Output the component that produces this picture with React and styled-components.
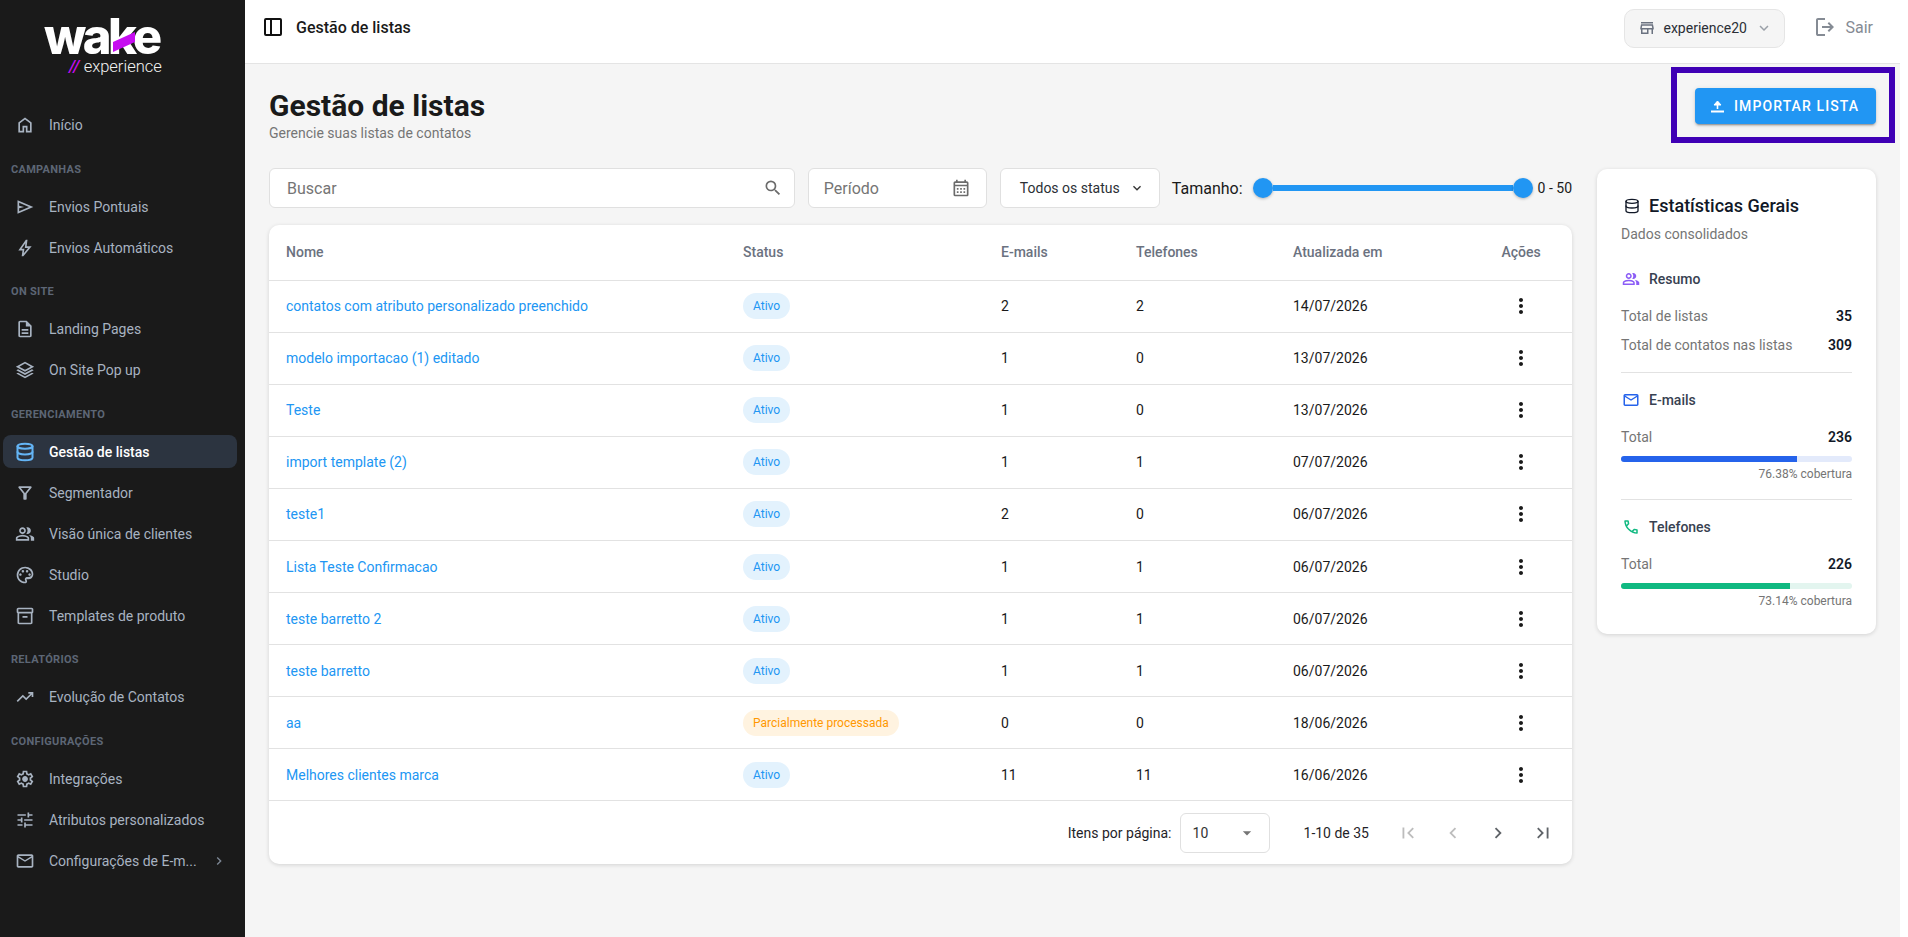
import styled, { createGlobalStyle } from "styled-components";
import {
  MdChevronRight,
  MdExpandMore,
  MdSearch,
  MdOutlineCalendarMonth,
  MdMoreVert,
  MdArrowDropDown,
  MdFirstPage,
  MdLastPage,
  MdChevronLeft,
} from "react-icons/md";
import { LuDatabase } from "react-icons/lu";

const GlobalStyle = createGlobalStyle`
  * { box-sizing: border-box; }
  html, body { margin: 0; padding: 0; background: #fff; }
  body { font-family: Roboto, "Liberation Sans", sans-serif; color: #1a1a1a; overflow: hidden; }
`;

// material symbols paths, the icon packages only have the older md set
const symbols = {
  home: "M240-200h120v-240h240v240h120v-360L480-740 240-560v360Zm-80 80v-480l320-240 320 240v480H520v-240h-80v240H160Z",
  send: "M120-160v-640l760 320-760 320Zm80-120 474-200-474-200v140l240 60-240 60v140Zm0 0v-400 400Z",
  bolt: "m422-232 207-248H469l29-227-185 267h139l-30 208ZM320-80l40-280H160l360-520h80l-40 320h240L400-80h-80Zm111-390Z",
  description:
    "M320-240h320v-80H320v80Zm0-160h320v-80H320v80ZM240-80q-33 0-56.5-23.5T160-160v-640q0-33 23.5-56.5T240-880h320l240 240v480q0 33-23.5 56.5T720-80H240Zm280-520v-200H240v640h480v-440H520ZM240-800v200-200 640-640Z",
  stacks:
    "M480-400 40-640l440-240 440 240-440 240Zm0 160L63-467l84-46 333 182 333-182 84 46-417 227Zm0 160L63-307l84-46 333 182 333-182 84 46L480-80Zm0-411 273-149-273-149-273 149 273 149Zm0-149Z",
  filter:
    "M440-160q-17 0-28.5-11.5T400-200v-240L168-736q-15-20-4.5-42t36.5-22h560q26 0 36.5 22t-4.5 42L560-440v240q0 17-11.5 28.5T520-160h-80Zm40-308 198-252H282l198 252Zm0 0Z",
  group:
    "M40-160v-112q0-34 17.5-62.5T104-378q62-31 126-46.5T360-440q66 0 130 15.5T616-378q29 15 46.5 43.5T680-272v112H40Zm720 0v-120q0-44-24.5-84.5T666-434q51 6 96 20.5t84 35.5q36 20 55 44.5t19 53.5v120H760ZM360-480q-66 0-113-47t-47-113q0-66 47-113t113-47q66 0 113 47t47 113q0 66-47 113t-113 47Zm400-160q0 66-47 113t-113 47q-11 0-28-2.5t-28-5.5q27-32 41.5-71t14.5-81q0-42-14.5-81T544-792q14-5 28-6.5t28-1.5q66 0 113 47t47 113ZM120-240h480v-32q0-11-5.5-20T580-306q-54-27-109-40.5T360-360q-56 0-111 13.5T140-306q-9 5-14.5 14t-5.5 20v32Zm240-320q33 0 56.5-23.5T440-640q0-33-23.5-56.5T360-720q-33 0-56.5 23.5T280-640q0 33 23.5 56.5T360-560Zm0 320Zm0-400Z",
  palette:
    "M480-80q-82 0-155-31.5t-127.5-86Q143-252 111.5-325T80-480q0-83 32.5-156t88-127Q256-817 330-848.5T488-880q80 0 151 27.5t124.5 76q53.5 48.5 85 115T880-518q0 115-70 176.5T640-280h-74q-9 0-12.5 5t-3.5 11q0 12 15 34.5t15 51.5q0 50-27.5 74T480-80Zm0-400Zm-220 40q26 0 43-17t17-43q0-26-17-43t-43-17q-26 0-43 17t-17 43q0 26 17 43t43 17Zm120-160q26 0 43-17t17-43q0-26-17-43t-43-17q-26 0-43 17t-17 43q0 26 17 43t43 17Zm200 0q26 0 43-17t17-43q0-26-17-43t-43-17q-26 0-43 17t-17 43q0 26 17 43t43 17Zm120 160q26 0 43-17t17-43q0-26-17-43t-43-17q-26 0-43 17t-17 43q0 26 17 43t43 17ZM480-160q11 0 15.5-5.5T500-178q0-13-15-35.5T470-274q0-42 29-74t71-32h70q66 0 113-39t47-99q0-110-82.5-181T488-800q-135 0-231.5 92.5T160-480q0 133 93.5 226.5T480-160Z",
  inventory:
    "M200-80q-33 0-56.5-23.5T120-160v-451q-18-11-29-28.5T80-680v-120q0-33 23.5-56.5T160-880h640q33 0 56.5 23.5T880-800v120q0 23-11 40.5T840-611v451q0 33-23.5 56.5T760-80H200Zm0-520v440h560v-440H200Zm-40-80h640v-120H160v120Zm200 280h240v-80H360v80Zm120 20Z",
  trending: "m136-240-56-56 296-298 160 160 208-206H640v-80h240v240h-80v-104L536-320 376-480 136-240Z",
  settings:
    "m370-80-16-128q-13-5-24.5-12T307-235l-119 50L78-375l103-78q-1-7-1-13.5v-27q0-6.5 1-13.5L78-585l110-190 119 50q11-8 23-15t24-12l16-128h220l16 128q13 5 24.5 12t22.5 15l119-50 110 190-103 78q1 7 1 13.5v27q0 6.5-2 13.5l103 78-110 190-118-50q-11 8-23 15t-24 12L590-80H370Zm70-80h79l14-106q31-8 57.5-23.5T639-327l99 41 39-68-86-65q5-14 7-29.5t2-31.5q0-16-2-31.5t-7-29.5l86-65-39-68-99 42q-22-23-48.5-38.5T533-694l-13-106h-79l-14 106q-31 8-57.5 23.5T321-633l-99-41-39 68 86 64q-5 15-7 30t-2 32q0 16 2 31t7 30l-86 65 39 68 99-42q22 23 48.5 38.5T427-266l13 106Zm42-180q58 0 99-41t41-99q0-58-41-99t-99-41q-59 0-99.5 41T342-480q0 58 40.5 99t99.5 41Zm-2-140Z",
  tune: "M440-120v-240h80v80h320v80H520v80h-80Zm-320-80v-80h240v80H120Zm160-160v-80H120v-80h160v-80h80v240h-80Zm160-80v-80h400v80H440Zm160-160v-240h80v80h160v80H680v80h-80Zm-480-80v-80h400v80H120Z",
  mail: "M160-160q-33 0-56.5-23.5T80-240v-480q0-33 23.5-56.5T160-800h640q33 0 56.5 23.5T880-720v480q0 33-23.5 56.5T800-160H160Zm320-280L160-640v400h640v-400L480-440Zm0-80 320-200H160l320 200ZM160-640v-80 480-400Z",
  store:
    "M160-720v-80h640v80H160Zm0 560v-240h-40v-80l40-200h640l40 200v80h-40v240h-80v-240H560v240H160Zm80-80h240v-160H240v160Zm-38-240h556-556Zm0 0h556l-24-120H226l-24 120Z",
  logout:
    "M200-120q-33 0-56.5-23.5T120-200v-560q0-33 23.5-56.5T200-840h280v80H200v560h280v80H200Zm440-160-55-58 102-102H360v-80h327L585-622l55-58 200 200-200 200Z",
  call: "M798-120q-125 0-247-54.5T329-329Q229-429 174.5-551T120-798q0-18 12-30t30-12h162q14 0 25 9.5t13 22.5l26 140q2 16-1 27t-11 19l-97 98q20 37 47.5 71.5T387-386q31 31 65 57.5t72 48.5l94-94q9-9 23.5-13.5T670-390l138 28q14 4 23 14.5t9 23.5v162q0 18-12 30t-30 12ZM241-600l66-66-17-94h-89q5 41 14 81t26 79Zm358 358q39 17 79.5 27t81.5 13v-88l-94-19-67 67ZM241-600Zm358 358Z",
};

const Sym = ({ name }) => (
  <svg width="1em" height="1em" viewBox="0 -960 960 960" fill="currentColor">
    <path d={symbols[name]} />
  </svg>
);

const Shell = styled.div`
  display: flex;
  width: 1900px;
  height: 937px;
  position: relative;
`;

const Sidebar = styled.aside`
  width: 245px;
  flex-shrink: 0;
  background: #1a1a1a;
  padding: 0 8px 0 3px;
`;

const LogoWrap = styled.div`
  position: relative;
  height: 108.5px;
  padding: 15px 0 0 41px;
`;

const LogoWord = styled.div`
  font-family: Inter, sans-serif;
  font-weight: 800;
  font-size: 49px;
  line-height: 44px;
  letter-spacing: -3.4px;
  color: #fff;
`;

const LogoSub = styled.div`
  margin-left: 25px;
  font-size: 16.5px;
  line-height: 16px;
  font-weight: 300;
  color: #f2f2f2;
  span {
    color: #c60cf0;
    font-style: italic;
    font-weight: 500;
    margin-right: 4px;
  }
`;

const LogoSlash = styled.svg`
  position: absolute;
  left: 109px;
  top: 30px;
`;

const NavLabel = styled.div`
  font-size: 11px;
  font-weight: 700;
  line-height: 14px;
  letter-spacing: 0.3px;
  color: #5d6675;
  padding-left: 8px;
  margin: 21px 0 13.5px;
`;

const NavItem = styled.div`
  display: flex;
  align-items: center;
  height: 33px;
  margin-bottom: 8px;
  padding: 0 6px 0 12px;
  border-radius: 8px;
  font-size: 14px;
  color: ${(p) => (p.$active ? "#fff" : "#a8b3c1")};
  font-weight: ${(p) => (p.$active ? 500 : 400)};
  background: ${(p) => (p.$active ? "#2c3440" : "transparent")};
  > svg {
    flex-shrink: 0;
    font-size: 20px;
    color: ${(p) => (p.$active ? "#64b5f6" : "#a8b3c1")};
  }
`;

const NavText = styled.span`
  margin-left: 14px;
  flex: 1;
  white-space: nowrap;
`;

const NavChevron = styled.span`
  display: flex;
  margin-right: 4px;
  svg {
    font-size: 16px;
    color: #7d8794;
  }
`;

const Main = styled.div`
  flex: 1;
  min-width: 0;
  background: #f5f5f5;
`;

const TopBar = styled.header`
  height: 64px;
  background: #fff;
  border-bottom: 1px solid #e4e4e4;
  display: flex;
  align-items: center;
  padding: 0 27px 9px 18px;
`;

const TopTitle = styled.div`
  margin-left: 13px;
  font-size: 16px;
  font-weight: 500;
  color: #1a1a1a;
  flex: 1;
`;

const StoreSelect = styled.div`
  width: 161px;
  height: 39px;
  margin-top: 2px;
  background: #f5f5f5;
  border: 1px solid #e5e5e5;
  border-radius: 10px;
  display: flex;
  align-items: center;
  padding: 0 11px 0 13px;
  font-size: 14px;
  color: #2b2f36;
  > svg:first-child {
    font-size: 18px;
    color: #6b7280;
    margin-right: 7px;
  }
  > svg:last-child {
    font-size: 18px;
    color: #9aa0a8;
    margin-left: auto;
  }
`;

const LogoutLink = styled.div`
  display: flex;
  align-items: center;
  margin-left: 28px;
  font-size: 16px;
  color: #858b94;
  svg {
    font-size: 24px;
    margin-right: 8px;
  }
`;

const Content = styled.main`
  padding: 24px 24px 0;
`;

const PageHead = styled.div`
  display: flex;
  justify-content: space-between;
  align-items: flex-start;
  height: 80px;
`;

const PageTitle = styled.h1`
  margin: 0;
  font-size: 30px;
  line-height: 36px;
  font-weight: 700;
  color: #1a1a1a;
`;

const PageSub = styled.p`
  margin: 1px 0 0;
  font-size: 14px;
  line-height: 16px;
  color: #757575;
`;

const ImportButton = styled.button`
  width: 181px;
  height: 36px;
  border: 0;
  border-radius: 4px;
  background: #2196f3;
  color: #fff;
  font-family: inherit;
  font-size: 14px;
  font-weight: 500;
  letter-spacing: 1.1px;
  display: flex;
  align-items: center;
  padding-left: 14px;
  gap: 7px;
  box-shadow: 0 3px 1px -2px rgba(0, 0, 0, 0.2), 0 2px 2px rgba(0, 0, 0, 0.14), 0 1px 5px rgba(0, 0, 0, 0.12);
  svg {
    flex-shrink: 0;
  }
`;

const Columns = styled.div`
  display: grid;
  grid-template-columns: 1303px 279px;
  gap: 25px;
  align-items: start;
`;

const Toolbar = styled.div`
  display: flex;
  align-items: center;
  height: 40px;
  margin-bottom: 17px;
`;

const Field = styled.div`
  height: 40px;
  background: #fff;
  border: 1px solid #e0e0e0;
  border-radius: 6px;
  display: flex;
  align-items: center;
  justify-content: space-between;
  font-size: 16px;
  color: #757575;
  flex: ${(p) => (p.$grow ? 1 : "none")};
  width: ${(p) => p.$w || "auto"};
  margin-right: 13px;
  padding: ${(p) => p.$pad || "0 11px 0 17px"};
  svg {
    font-size: 20px;
    color: #6b6b6b;
  }
`;

const StatusSelect = styled(Field)`
  font-size: 14px;
  color: #2b2f36;
  margin-right: 12px;
  svg {
    color: #333;
    font-size: 16px;
  }
`;

const SliderLabel = styled.span`
  font-size: 16px;
  color: #1a1a1a;
  white-space: nowrap;
`;

const Slider = styled.div`
  display: flex;
  align-items: center;
  width: 280px;
  margin: 0 5px 0 10px;
`;

const Thumb = styled.span`
  width: 20px;
  height: 20px;
  border-radius: 50%;
  background: #2196f3;
  flex-shrink: 0;
  box-shadow: 0 1px 3px rgba(0, 0, 0, 0.25);
`;

const Track = styled.span`
  flex: 1;
  height: 6px;
  background: #2196f3;
`;

const SliderValue = styled.span`
  font-size: 14px;
  color: #1a1a1a;
  white-space: nowrap;
`;

const Card = styled.section`
  background: #fff;
  border-radius: 10px;
  box-shadow: 0 1px 4px rgba(0, 0, 0, 0.14);
`;

const TableRow = styled.div`
  display: grid;
  grid-template-columns: 457px 258px 135px 157px 177px 102px;
  align-items: center;
  height: ${(p) => (p.$head ? "55.5px" : "52.1px")};
  border-bottom: 1px solid #e2e2e2;
  font-size: 14px;
  padding-left: 17px;
  color: ${(p) => (p.$head ? "#6b7280" : "#1a1a1a")};
  font-weight: ${(p) => (p.$head ? 500 : 400)};
`;

const NameLink = styled.a`
  color: #2196f3;
`;

const Chip = styled.span`
  justify-self: start;
  height: 26px;
  line-height: 26px;
  padding: 0 10px;
  border-radius: 13px;
  font-size: 12px;
  background: ${(p) => (p.$warn ? "#fff3e0" : "#e3f2fd")};
  color: ${(p) => (p.$warn ? "#ff9800" : "#2196f3")};
`;

const HeadAction = styled.div`
  text-align: center;
`;

const ActionCell = styled.div`
  display: flex;
  justify-content: center;
  font-size: 24px;
  color: #1a1a1a;
  svg {
    display: block;
  }
`;

const Pager = styled.div`
  height: 63px;
  display: flex;
  align-items: center;
  justify-content: flex-end;
  padding-right: 7px;
  font-size: 14px;
  color: #1f2328;
`;

const PageSize = styled.div`
  width: 90px;
  height: 40px;
  margin: 0 34px 0 8px;
  border: 1px solid #e0e0e0;
  border-radius: 6px;
  display: flex;
  align-items: center;
  justify-content: space-between;
  padding: 0 12px;
  color: #333;
  svg {
    font-size: 20px;
    color: #757575;
  }
`;

const PagerBtn = styled.span`
  display: flex;
  justify-content: center;
  width: 45px;
  font-size: 22px;
  color: ${(p) => (p.$off ? "#bdbdbd" : "#5f6368")};
`;

const PagerButtons = styled.div`
  display: flex;
  margin-left: 16px;
`;

const StatsCard = styled(Card)`
  margin-top: 1px;
  padding: 24px 24px 25px;
`;

const StatsTitle = styled.h2`
  margin: 0;
  display: flex;
  align-items: center;
  gap: 9px;
  font-size: 18px;
  line-height: 26px;
  font-weight: 500;
  color: #111827;
  svg {
    font-size: 16px;
    margin-left: 3px;
  }
`;

const StatsSub = styled.p`
  margin: 5px 0 25px;
  font-size: 14px;
  line-height: 20px;
  color: #757575;
`;

const GroupTitle = styled.div`
  display: flex;
  align-items: center;
  gap: 9px;
  height: 20px;
  margin-bottom: 17px;
  font-size: 14px;
  font-weight: 500;
  color: #374151;
  padding-left: 1px;
  svg {
    font-size: 18px;
    color: ${(p) => p.$color};
  }
`;

const StatRow = styled.div`
  display: flex;
  justify-content: space-between;
  align-items: center;
  height: 20px;
  margin-bottom: ${(p) => p.$gap || "9px"};
  font-size: 14px;
  color: #757575;
  b {
    font-weight: 600;
    color: #111827;
  }
`;

const Bar = styled.div`
  height: 6px;
  border-radius: 3px;
  overflow: hidden;
  background: ${(p) => p.$track};
  div {
    height: 100%;
    background: ${(p) => p.$fill};
  }
`;

const Coverage = styled.div`
  margin-top: 4px;
  text-align: right;
  font-size: 12px;
  line-height: 16px;
  color: #757575;
`;

const Divider = styled.hr`
  margin: 17px 0;
  border: 0;
  border-top: 1px solid #e2e2e2;
`;

const Highlight = styled.div`
  position: absolute;
  left: 1671px;
  top: 67px;
  width: 224px;
  height: 76px;
  border: 6px solid #3f00b5;
`;

const PanelIcon = () => (
  <svg width="20" height="20" viewBox="0 0 20 20" fill="none" stroke="#111" strokeWidth="2">
    <rect x="2" y="2" width="16" height="16" rx="1" />
    <path d="M8 2v16" />
  </svg>
);

const UploadIcon = () => (
  <svg width="18" height="18" viewBox="0 0 18 18" fill="none" stroke="#fff">
    <path d="M2 14.500h13" strokeWidth="2" />
    <path d="M8.500 12V5" strokeWidth="1.6" />
    <path d="M5 8l3.500-4L12 8z" fill="#fff" strokeWidth="1" />
  </svg>
);

const navGroups = [
  { items: [{ icon: <Sym name="home" />, text: "Início" }] },
  {
    label: "CAMPANHAS",
    items: [
      { icon: <Sym name="send" />, text: "Envios Pontuais" },
      { icon: <Sym name="bolt" />, text: "Envios Automáticos" },
    ],
  },
  {
    label: "ON SITE",
    items: [
      { icon: <Sym name="description" />, text: "Landing Pages" },
      { icon: <Sym name="stacks" />, text: "On Site Pop up" },
    ],
  },
  {
    label: "GERENCIAMENTO",
    items: [
      { icon: <LuDatabase strokeWidth={2.4} />, text: "Gestão de listas", active: true },
      { icon: <Sym name="filter" />, text: "Segmentador" },
      { icon: <Sym name="group" />, text: "Visão única de clientes" },
      { icon: <Sym name="palette" />, text: "Studio" },
      { icon: <Sym name="inventory" />, text: "Templates de produto" },
    ],
  },
  { label: "RELATÓRIOS", items: [{ icon: <Sym name="trending" />, text: "Evolução de Contatos" }] },
  {
    label: "CONFIGURAÇÕES",
    items: [
      { icon: <Sym name="settings" />, text: "Integrações" },
      { icon: <Sym name="tune" />, text: "Atributos personalizados" },
      { icon: <Sym name="mail" />, text: "Configurações de E-m...", more: true },
    ],
  },
];

const lists = [
  ["contatos com atributo personalizado preenchido", "Ativo", 2, 2, "14/07/2026"],
  ["modelo importacao (1) editado", "Ativo", 1, 0, "13/07/2026"],
  ["Teste", "Ativo", 1, 0, "13/07/2026"],
  ["import template (2)", "Ativo", 1, 1, "07/07/2026"],
  ["teste1", "Ativo", 2, 0, "06/07/2026"],
  ["Lista Teste Confirmacao", "Ativo", 1, 1, "06/07/2026"],
  ["teste barretto 2", "Ativo", 1, 1, "06/07/2026"],
  ["teste barretto", "Ativo", 1, 1, "06/07/2026"],
  ["aa", "Parcialmente processada", 0, 0, "18/06/2026"],
  ["Melhores clientes marca", "Ativo", 11, 11, "16/06/2026"],
];

export default function App() {
  return (
    <>
      <GlobalStyle />
      <Shell>
        <Sidebar>
          <LogoWrap>
            <LogoWord>wake</LogoWord>
            <LogoSub>
              <span>//</span>experience
            </LogoSub>
            <LogoSlash width="24" height="24" viewBox="0 0 24 24">
              <polygon points="23,2 23,12 1,22 1,12" fill="#c60cf0" />
            </LogoSlash>
          </LogoWrap>
          {navGroups.map((group, i) => (
            <div key={i}>
              {group.label && <NavLabel>{group.label}</NavLabel>}
              {group.items.map((item) => (
                <NavItem key={item.text} $active={item.active}>
                  {item.icon}
                  <NavText>{item.text}</NavText>
                  {item.more && (
                    <NavChevron>
                      <MdChevronRight />
                    </NavChevron>
                  )}
                </NavItem>
              ))}
            </div>
          ))}
        </Sidebar>
        <Main>
          <TopBar>
            <PanelIcon />
            <TopTitle>Gestão de listas</TopTitle>
            <StoreSelect>
              <Sym name="store" />
              experience20
              <MdExpandMore />
            </StoreSelect>
            <LogoutLink>
              <Sym name="logout" />
              Sair
            </LogoutLink>
          </TopBar>
          <Content>
            <PageHead>
              <div>
                <PageTitle>Gestão de listas</PageTitle>
                <PageSub>Gerencie suas listas de contatos</PageSub>
              </div>
              <ImportButton>
                <UploadIcon />
                IMPORTAR LISTA
              </ImportButton>
            </PageHead>
            <Columns>
              <div>
                <Toolbar>
                  <Field $grow>
                    Buscar
                    <MdSearch />
                  </Field>
                  <Field $w="179px" $pad="0 15px">
                    Período
                    <MdOutlineCalendarMonth />
                  </Field>
                  <StatusSelect $w="160px" $pad="0 14px 0 19px">
                    Todos os status
                    <MdExpandMore />
                  </StatusSelect>
                  <SliderLabel>Tamanho:</SliderLabel>
                  <Slider>
                    <Thumb />
                    <Track />
                    <Thumb />
                  </Slider>
                  <SliderValue>0 - 50</SliderValue>
                </Toolbar>
                <Card>
                  <TableRow $head>
                    <div>Nome</div>
                    <div>Status</div>
                    <div>E-mails</div>
                    <div>Telefones</div>
                    <div>Atualizada em</div>
                    <HeadAction>Ações</HeadAction>
                  </TableRow>
                  {lists.map((row) => (
                    <TableRow key={row[0]}>
                      <NameLink>{row[0]}</NameLink>
                      <Chip $warn={row[1] !== "Ativo"}>{row[1]}</Chip>
                      <div>{row[2]}</div>
                      <div>{row[3]}</div>
                      <div>{row[4]}</div>
                      <ActionCell>
                        <MdMoreVert />
                      </ActionCell>
                    </TableRow>
                  ))}
                  <Pager>
                    Itens por página:
                    <PageSize>
                      10
                      <MdArrowDropDown />
                    </PageSize>
                    1-10 de 35
                    <PagerButtons>
                      <PagerBtn $off>
                        <MdFirstPage />
                      </PagerBtn>
                      <PagerBtn $off>
                        <MdChevronLeft />
                      </PagerBtn>
                      <PagerBtn>
                        <MdChevronRight />
                      </PagerBtn>
                      <PagerBtn>
                        <MdLastPage />
                      </PagerBtn>
                    </PagerButtons>
                  </Pager>
                </Card>
              </div>
              <StatsCard>
                <StatsTitle>
                  <LuDatabase />
                  Estatísticas Gerais
                </StatsTitle>
                <StatsSub>Dados consolidados</StatsSub>
                <GroupTitle $color="#8b5cf6">
                  <Sym name="group" />
                  Resumo
                </GroupTitle>
                <StatRow>
                  Total de listas
                  <b>35</b>
                </StatRow>
                <StatRow $gap="0">
                  Total de contatos nas listas
                  <b>309</b>
                </StatRow>
                <Divider />
                <GroupTitle $color="#2563eb">
                  <Sym name="mail" />
                  E-mails
                </GroupTitle>
                <StatRow>
                  Total
                  <b>236</b>
                </StatRow>
                <Bar $track="#e3eafb" $fill="#2563eb">
                  <div style={{ width: "76.38%" }} />
                </Bar>
                <Coverage>76.38% cobertura</Coverage>
                <Divider />
                <GroupTitle $color="#10b981">
                  <Sym name="call" />
                  Telefones
                </GroupTitle>
                <StatRow>
                  Total
                  <b>226</b>
                </StatRow>
                <Bar $track="#e3f5ef" $fill="#10b981">
                  <div style={{ width: "73.14%" }} />
                </Bar>
                <Coverage>73.14% cobertura</Coverage>
              </StatsCard>
            </Columns>
          </Content>
        </Main>
        <Highlight />
      </Shell>
    </>
  );
}
